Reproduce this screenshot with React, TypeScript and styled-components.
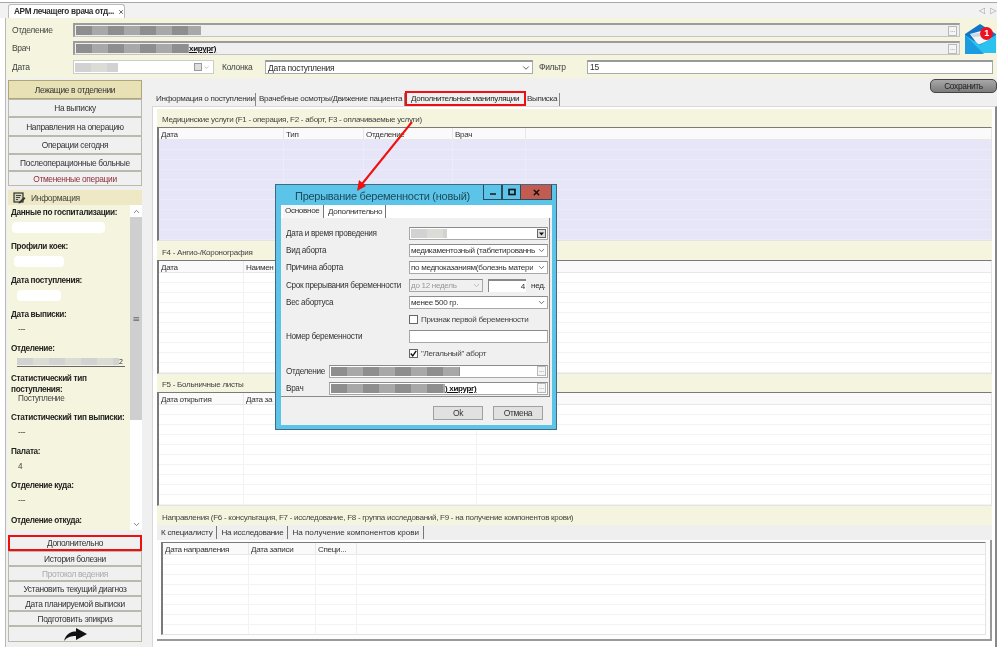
import React from "react";
import styled, { createGlobalStyle } from "styled-components";
import { ChevronDown, ChevronUp, X } from "lucide-react";

const GlobalStyle = createGlobalStyle`
  html, body {
    margin: 0;
    padding: 0;
    background: #fff;
  }
  body {
    font-family: "Liberation Sans", "Noto Sans", sans-serif;
    font-size: 8.5px;
    letter-spacing: -0.32px;
    color: #2e2e2e;
  }
  * {
    box-sizing: border-box;
  }
`;

const sideInfo = [
  { label: "Данные по госпитализации:", pill: 93, indent: 1, h: 34 },
  { label: "Профили коек:", pill: 50, indent: 3, h: 34 },
  { label: "Дата поступления:", pill: 44, indent: 6, h: 34 },
  { label: "Дата выписки:", value: "---", h: 34 },
  { label: "Отделение:", smudge: true, h: 30 },
  { label: "Статистический тип поступления:", value: "Поступление", tight: true, h: 39 },
  { label: "Статистический тип выписки:", value: "---", h: 34 },
  { label: "Палата:", value: "4", h: 34 },
  { label: "Отделение куда:", value: "---", h: 35 },
  { label: "Отделение откуда:", h: 12 },
];

const medCols = [
  { title: "Дата", w: 125 },
  { title: "Тип", w: 80 },
  { title: "Отделение", w: 89 },
  { title: "Врач", w: 73 },
];

// the dialog covers the rest of these two headers
const angioCols = [
  { title: "Дата", w: 85 },
  { title: "Наимен", w: 233 },
];

const sickCols = [
  { title: "Дата открытия", w: 85 },
  { title: "Дата за", w: 233 },
];

const referralCols = [
  { title: "Дата направления", w: 86 },
  { title: "Дата записи", w: 67 },
  { title: "Специ...", w: 41 },
];

type Col = { title: string; w: number };

function DataTable({ cols, height, lavender }: { cols: Col[]; height: number; lavender?: boolean }) {
  return (
    <TableBox $h={height}>
      <TableHead>
        {cols.map((c) => (
          <HeadCell key={c.title} $w={c.w}>
            {c.title}
          </HeadCell>
        ))}
        <HeadFill />
      </TableHead>
      <TableBody $lavender={lavender}>
        {cols.map((c) => (
          <BodyCol key={c.title} $w={c.w} $lavender={lavender} />
        ))}
      </TableBody>
    </TableBox>
  );
}

function Dots() {
  return <DotsButton>...</DotsButton>;
}

function MailIcon() {
  return (
    <MailWrap>
      <svg width="33" height="32" viewBox="0 0 33 32">
        <path d="M1 11 L16 1 L32 11 V30 H1 Z" fill="#1276c6" />
        <path d="M6 11 L24 6 L28 16 L14 22 Z" fill="#f4f4f4" />
        <path d="M6 11 L24 9 L20 13 L10 14 Z" fill="#c9d9e6" />
        <path d="M1 12 L16 22 L32 12 V30 H1 Z" fill="#2cc2f0" />
        <path d="M1 12 L20 31 H1 Z" fill="#1c9be0" />
      </svg>
      <MailBadge>1</MailBadge>
    </MailWrap>
  );
}

function NoteIcon() {
  return (
    <svg width="13" height="12" viewBox="0 0 13 12">
      <rect x="1" y="1" width="9" height="9" fill="#d8d4bc" stroke="#333" strokeWidth="1.2" />
      <path d="M3 3.5H8M3 5.5H7M3 7.5H5" stroke="#333" strokeWidth="0.9" />
      <path d="M6 10 L11 5 L12.5 6.5 L7.5 11 L5.5 11.5 Z" fill="#333" />
    </svg>
  );
}

function App() {
  return (
    <>
      <GlobalStyle />
      <Screen>
        <TabStrip>
          <DocTab>
            <DocTabTitle>АРМ лечащего врача отд...</DocTabTitle>
            <X size={8} strokeWidth={3} color="#333" />
          </DocTab>
          <StripArrows>◁ ▷</StripArrows>
        </TabStrip>

        <Filters>
          <FilterRow>
            <FilterLabel>Отделение</FilterLabel>
            <ReadField>
              <Smudge $w={125} />
              <Dots />
            </ReadField>
          </FilterRow>
          <FilterRow>
            <FilterLabel>Врач</FilterLabel>
            <ReadField>
              <Smudge $w={113} />
              <FieldText $bold>хирург)</FieldText>
              <Dots />
            </ReadField>
          </FilterRow>
          <DateRow>
            <FilterLabel>Дата</FilterLabel>
            <DateField>
              <Smudge $w={43} $light />
              <CalendarMark />
              <ChevronDown size={7} color="#999" />
            </DateField>
            <ColumnLabel>Колонка</ColumnLabel>
            <ColumnSelect>
              Дата поступления
              <ChevronDown size={10} color="#444" />
            </ColumnSelect>
            <FilterName>Фильтр</FilterName>
            <FilterInput>15</FilterInput>
          </DateRow>
          <MailIcon />
        </Filters>

        <Main>
          <Sidebar>
            <NavGroup>
              <NavButton $h={19} $active>Лежащие в отделении</NavButton>
              <NavButton $h={18}>На выписку</NavButton>
              <NavButton $h={19}>Направления на операцию</NavButton>
              <NavButton $h={18}>Операции сегодня</NavButton>
              <NavButton $h={17}>Послеоперационные больные</NavButton>
              <NavButton $h={15} $tone="#8d2f3a">Отмененные операции</NavButton>
            </NavGroup>

            <InfoHeader>
              <NoteIcon />
              <span>Информация</span>
            </InfoHeader>
            <InfoPanel>
              <InfoList>
                {sideInfo.map((item) => (
                  <InfoItem key={item.label} $h={item.h}>
                    <InfoLabel>{item.label}</InfoLabel>
                    {item.pill && <Pill $w={item.pill} $indent={item.indent} />}
                    {item.value && <InfoValue $tight={item.tight}>{item.value}</InfoValue>}
                    {item.smudge && (
                      <SmudgeLine>
                        <Smudge $w={102} $light $short />2
                      </SmudgeLine>
                    )}
                  </InfoItem>
                ))}
              </InfoList>
              <ScrollBar>
                <ScrollEnd>
                  <ChevronUp size={9} color="#555" />
                </ScrollEnd>
                <ScrollThumb>≡</ScrollThumb>
                <ScrollRest />
                <ScrollEnd>
                  <ChevronDown size={9} color="#555" />
                </ScrollEnd>
              </ScrollBar>
            </InfoPanel>

            <ActionGroup>
              <NavButton $h={16} $marked>Дополнительно</NavButton>
              <NavButton $h={15}>История болезни</NavButton>
              <NavButton $h={15} $tone="#aaa">Протокол ведения</NavButton>
              <NavButton $h={15}>Установить текущий диагноз</NavButton>
              <NavButton $h={15}>Дата планируемой выписки</NavButton>
              <NavButton $h={15}>Подготовить эпикриз</NavButton>
              <NavButton $h={16}>
                <svg width="23" height="13" viewBox="0 0 23 13">
                  <path d="M0 13 C2 6 6 3.5 12 3.5 V0 L23 6 L12 12 V8 C7 8 3 9 0 13 Z" fill="#111" />
                </svg>
              </NavButton>
            </ActionGroup>
          </Sidebar>

          <Content>
            <SaveRow>
              <SaveButton>Сохранить</SaveButton>
            </SaveRow>
            <TabRow>
              <PageTab $w={102} $pad={2}>Информация о поступлении</PageTab>
              <PageTab $w={149} $pad={3}>Врачебные осмотры/Движение пациента</PageTab>
              <MarkedTab>Дополнительные манипуляции</MarkedTab>
              <PageTab $w={34} $pad={1}>Выписка</PageTab>
            </TabRow>
            <Panel>
              <SectionHead $h={18}>Медицинские услуги (F1 - операция, F2 - аборт, F3 - оплачиваемые услуги)</SectionHead>
              <DataTable cols={medCols} height={114} lavender />
              <SectionHead $h={19}>F4 - Ангио-/Коронография</SectionHead>
              <DataTable cols={angioCols} height={114} />
              <SectionHead $h={18}>F5 - Больничные листы</SectionHead>
              <DataTable cols={sickCols} height={114} />
              <SectionHead $h={19}>
                Направления (F6 - консультация, F7 - исследование, F8 - группа исследований, F9 - на получение компонентов крови)
              </SectionHead>
              <SubTabs>
                <SubTab>К специалисту</SubTab>
                <SubTab>На исследование</SubTab>
                <SubTab $wide>На получение компонентов крови</SubTab>
              </SubTabs>
              <SubPanel>
                <DataTable cols={referralCols} height={93} />
              </SubPanel>
            </Panel>
          </Content>
        </Main>

        <Dialog>
          <TitleBar>
            <DialogTitle>Прерывание беременности (новый)</DialogTitle>
            <WinButton $w={19}>
              <svg width="8" height="8" viewBox="0 0 8 8">
                <path d="M1 6H7" stroke="#222" strokeWidth="1.6" />
              </svg>
            </WinButton>
            <WinButton $w={19}>
              <svg width="8" height="8" viewBox="0 0 8 8">
                <rect x="1" y="1.5" width="6" height="5" fill="none" stroke="#111" strokeWidth="1.6" />
              </svg>
            </WinButton>
            <WinButton $w={31} $close>
              <X size={9} strokeWidth={4} color="#111" />
            </WinButton>
          </TitleBar>
          <DialogBody>
            <DialogTabs>
              <DialogTab $w={41} $active>Основное</DialogTab>
              <DialogTab $w={62}>Дополнительно</DialogTab>
            </DialogTabs>
            <DialogPanel>
              <FormRow>
                <FormLabel>Дата и время проведения</FormLabel>
                <FormBox>
                  <Smudge $w={36} $light />
                  <DropMark>
                    <svg width="7" height="7" viewBox="0 0 7 7">
                      <path d="M1 2.5H6L3.5 5.5Z" fill="#111" />
                    </svg>
                  </DropMark>
                </FormBox>
              </FormRow>
              <FormRow>
                <FormLabel>Вид аборта</FormLabel>
                <FormBox>
                  <BoxText>медикаментозный (таблетированнь</BoxText>
                  <ChevronDown size={9} color="#444" />
                </FormBox>
              </FormRow>
              <FormRow>
                <FormLabel>Причина аборта</FormLabel>
                <FormBox>
                  <BoxText>по медпоказаниям(болезнь матери</BoxText>
                  <ChevronDown size={9} color="#444" />
                </FormBox>
              </FormRow>
              <FormRow>
                <FormLabel>Срок прерывания беременности</FormLabel>
                <TermCell>
                  <FormBox $w={74} $muted>
                    <BoxText>до 12 недель</BoxText>
                    <ChevronDown size={9} color="#aaa" />
                  </FormBox>
                  <WeekInput>4</WeekInput>
                  <span>нед.</span>
                </TermCell>
              </FormRow>
              <FormRow>
                <FormLabel>Вес абортуса</FormLabel>
                <FormBox>
                  <BoxText>менее 500 гр.</BoxText>
                  <ChevronDown size={9} color="#444" />
                </FormBox>
              </FormRow>
              <FormRow>
                <span />
                <CheckLine>
                  <CheckBox />
                  Признак первой беременности
                </CheckLine>
              </FormRow>
              <FormRow>
                <FormLabel>Номер беременности</FormLabel>
                <FormBox />
              </FormRow>
              <FormRow>
                <span />
                <CheckLine>
                  <CheckBox>
                    <svg width="9" height="9" viewBox="0 0 9 9">
                      <path d="M1 4.5 L3.5 7.5 L8 1" fill="none" stroke="#111" strokeWidth="1.8" />
                    </svg>
                  </CheckBox>
                  "Легальный" аборт
                </CheckLine>
              </FormRow>
              <FormRow $short>
                <FormLabel>Отделение</FormLabel>
                <FormBox>
                  <Smudge $w={129} />
                  <Dots />
                </FormBox>
              </FormRow>
              <FormRow $short>
                <FormLabel>Врач</FormLabel>
                <FormBox>
                  <Smudge $w={114} />
                  <FieldText $bold>) хирург)</FieldText>
                  <Dots />
                </FormBox>
              </FormRow>
            </DialogPanel>
            <DialogFooter>
              <DialogButton>Ok</DialogButton>
              <DialogButton>Отмена</DialogButton>
            </DialogFooter>
          </DialogBody>
        </Dialog>

        <ArrowLayer width="999" height="647" viewBox="0 0 999 647">
          <path d="M412 122 L362 184" stroke="#f01010" strokeWidth="2" fill="none" />
          <path d="M357 191 L359 180 L366 186 Z" fill="#f01010" />
        </ArrowLayer>
      </Screen>
    </>
  );
}

export default App;

const Screen = styled.div`
  position: relative;
  width: 999px;
  height: 647px;
  overflow: hidden;
  padding: 2px 2px 0 5px;
  background: #fff;
  filter: blur(0.3px);
`;

const TabStrip = styled.div`
  display: flex;
  justify-content: space-between;
  align-items: flex-end;
  height: 16px;
  margin-left: -5px;
  padding-left: 8px;
  border-top: 1px solid #a8a8a8;
  background: #f2f2f2;
`;

const DocTab = styled.div`
  display: flex;
  align-items: center;
  gap: 4px;
  width: 117px;
  height: 14px;
  padding-left: 5px;
  background: #fff;
  border: 1px solid #bbb;
  border-bottom: 0;
  border-radius: 3px 3px 0 0;
`;

const DocTabTitle = styled.span`
  font-weight: 700;
  font-size: 8.2px;
  white-space: nowrap;
`;

const StripArrows = styled.span`
  font-family: "DejaVu Sans", sans-serif;
  font-size: 8px;
  word-spacing: 3px;
  color: #999;
  padding: 0 1px 3px 0;
`;

const Filters = styled.div`
  position: relative;
  height: 60px;
  padding: 5px 0 0 6px;
  background: #f5f4de;
  border-left: 1px solid #b8b8b8;
  display: flex;
  flex-direction: column;
  gap: 4px;
`;

const FilterRow = styled.div`
  display: flex;
  align-items: center;
  height: 14px;
`;

const DateRow = styled(FilterRow)`
  margin-top: 1px;
`;

const FilterLabel = styled.span`
  width: 61px;
  font-size: 8.5px;
  color: #444;
`;

const ReadField = styled.div`
  display: flex;
  align-items: center;
  width: 887px;
  height: 14px;
  padding: 0 2px 0 1px;
  background: #efefef;
  border: 1px solid #c4c4c4;
  border-top: 2px solid #9c9c9c;
  border-left: 2px solid #9c9c9c;
`;

const DotsButton = styled.span`
  margin-left: auto;
  flex: none;
  width: 9px;
  height: 10px;
  line-height: 6px;
  text-align: center;
  font-size: 7px;
  color: #888;
  background: #f4f4f4;
  border: 1px solid #b9b9b9;
`;

const Smudge = styled.span<{ $w: number; $light?: boolean; $short?: boolean }>`
  display: inline-block;
  flex: none;
  width: ${({ $w }) => $w}px;
  height: ${({ $short }) => ($short ? 7 : 9)}px;
  background: repeating-linear-gradient(
    90deg,
    ${({ $light }) => ($light ? "#d2d2d2" : "#8e8e8e")} 0 16px,
    ${({ $light }) => ($light ? "#dcdcd6" : "#a8a8a8")} 16px 32px
  );
`;

const FieldText = styled.span<{ $bold?: boolean }>`
  font-weight: ${({ $bold }) => ($bold ? 700 : 400)};
  color: #111;
  font-size: 8px;
  text-decoration: underline;
  white-space: nowrap;
`;

const DateField = styled.div`
  display: flex;
  align-items: center;
  width: 141px;
  height: 14px;
  padding: 0 3px 0 1px;
  background: #fff;
  border: 1px solid #ccc;
`;

const CalendarMark = styled.span`
  margin-left: auto;
  width: 8px;
  height: 8px;
  margin-right: 1px;
  background: #ddd;
  border: 1px solid #999;
`;

const ColumnLabel = styled.span`
  width: 43px;
  margin-left: 8px;
  color: #444;
`;

const ColumnSelect = styled.div`
  display: flex;
  align-items: center;
  justify-content: space-between;
  width: 268px;
  height: 14px;
  padding: 0 1px 0 2px;
  background: #fff;
  border: 1px solid #aaa;
  border-top: 2px solid #999;
`;

const FilterName = styled.span`
  width: 48px;
  margin-left: 6px;
  color: #444;
`;

const FilterInput = styled.div`
  width: 406px;
  height: 14px;
  padding-left: 2px;
  line-height: 11px;
  background: #fff;
  border: 1px solid #aaa;
  border-top: 2px solid #999;
`;

const MailWrap = styled.div`
  position: absolute;
  top: 5px;
  right: 0;
  width: 33px;
  height: 32px;
`;

const MailBadge = styled.span`
  position: absolute;
  top: 4px;
  left: 16px;
  width: 13px;
  height: 13px;
  line-height: 13px;
  text-align: center;
  border-radius: 50%;
  background: #ee1122;
  color: #fff;
  font-size: 9px;
  font-weight: 700;
`;

const Main = styled.div`
  display: flex;
  height: 569px;
  background: #f0f0f0;
  border-left: 1px solid #b8b8b8;
`;

const Sidebar = styled.aside`
  display: flex;
  flex-direction: column;
  width: 134px;
  margin: 2px 0 0 2px;
  flex: none;
`;

const NavGroup = styled.div`
  display: flex;
  flex-direction: column;
`;

const ActionGroup = styled(NavGroup)`
  margin-top: 5px;
`;

const NavButton = styled.div<{ $h: number; $active?: boolean; $marked?: boolean; $tone?: string }>`
  display: flex;
  align-items: center;
  justify-content: center;
  height: ${({ $h }) => $h}px;
  font-size: 8.4px;
  white-space: nowrap;
  color: ${({ $tone }) => $tone ?? "#333"};
  background: ${({ $active }) => ($active ? "#e9e1b6" : "#f0f0f0")};
  border: ${({ $active, $marked }) =>
    $marked ? "2px solid #ee1010" : $active ? "1px solid #b0a574" : "1px solid #b9b9ad"};
`;

const InfoHeader = styled.div`
  display: flex;
  align-items: center;
  gap: 5px;
  height: 15px;
  margin-top: 4px;
  padding-left: 5px;
  background: #eee8c4;
  color: #444;
  font-size: 8.5px;
`;

const InfoPanel = styled.div`
  display: flex;
  height: 325px;
  background: #f5f4de;
`;

const InfoList = styled.div`
  flex: 1;
  min-width: 0;
  padding: 1.5px 0 0 3px;
  overflow: hidden;
`;

const InfoItem = styled.div<{ $h: number }>`
  height: ${({ $h }) => $h}px;
`;

const InfoLabel = styled.div`
  width: 118px;
  line-height: 11px;
  font-size: 8.2px;
  font-weight: 700;
  color: #222;
`;

const InfoValue = styled.div<{ $tight?: boolean }>`
  margin: ${({ $tight }) => ($tight ? "-1px" : "5px")} 0 0 7px;
  line-height: 10px;
  font-size: 8.2px;
  color: #444;
`;

const Pill = styled.div<{ $w: number; $indent?: number }>`
  width: ${({ $w }) => $w}px;
  height: 11px;
  margin: 4px 0 0 ${({ $indent }) => $indent ?? 0}px;
  background: #fff;
  border-radius: 4px;
`;

const SmudgeLine = styled.div`
  display: flex;
  align-items: center;
  width: 108px;
  margin: 4px 0 0 6px;
  font-size: 7px;
  line-height: 8px;
  border-bottom: 1px solid #666;
`;

const ScrollBar = styled.div`
  display: flex;
  flex-direction: column;
  width: 12px;
  flex: none;
  background: #fff;
`;

const ScrollEnd = styled.div`
  display: flex;
  align-items: center;
  justify-content: center;
  height: 12px;
  background: #fff;
`;

const ScrollThumb = styled.div`
  display: flex;
  align-items: center;
  justify-content: center;
  height: 203px;
  background: #cfcfcf;
  color: #666;
  font-family: "DejaVu Sans", sans-serif;
  font-size: 9px;
`;

const ScrollRest = styled.div`
  flex: 1;
`;

const Content = styled.main`
  display: flex;
  flex-direction: column;
  width: 845px;
  margin-left: 10px;
`;

const SaveRow = styled.div`
  display: flex;
  justify-content: flex-end;
  height: 17px;
  padding-top: 1px;
`;

const SaveButton = styled.div`
  width: 67px;
  height: 14px;
  line-height: 12px;
  text-align: center;
  font-size: 8.4px;
  color: #222;
  border: 1px solid #444;
  border-radius: 5px;
  background: linear-gradient(#a8a8a8, #7c7c7c);
`;

const TabRow = styled.div`
  display: flex;
  align-items: flex-end;
  height: 13px;
  padding-left: 2px;
`;

const PageTab = styled.div<{ $w: number; $pad: number }>`
  width: ${({ $w }) => $w}px;
  height: 13px;
  padding-left: ${({ $pad }) => $pad}px;
  line-height: 12px;
  white-space: nowrap;
  font-size: 8.1px;
  color: #333;
  border-right: 1px solid #888;
`;

const MarkedTab = styled.div`
  position: relative;
  z-index: 1;
  width: 121px;
  height: 15px;
  line-height: 11px;
  padding-left: 4px;
  white-space: nowrap;
  font-size: 8.1px;
  color: #222;
  background: #f0f0f0;
  border: 2px solid #ee1010;
`;

const Panel = styled.div`
  flex: 1;
  padding: 2px 3px 6px 4px;
  background: #fff;
  border: 1px solid #d8d8d8;
  border-right: 2px solid #888;
  border-bottom: 2px solid #888;
`;

const SectionHead = styled.div<{ $h: number }>`
  display: flex;
  align-items: center;
  height: ${({ $h }) => $h}px;
  padding: 3px 0 0 5px;
  background: #f5f4de;
  font-size: 8px;
  letter-spacing: -0.27px;
  color: #444;
  white-space: nowrap;
`;

const TableBox = styled.div<{ $h: number }>`
  display: flex;
  flex-direction: column;
  height: ${({ $h }) => $h}px;
  background: #fff;
  border-top: 1px solid #7a7a7a;
  border-left: 2px solid #7a7a7a;
  border-right: 1px solid #e4e4e4;
  border-bottom: 1px solid #e4e4e4;
`;

const TableHead = styled.div`
  display: flex;
  height: 12px;
  flex: none;
  background: #fafafa;
  border-bottom: 1px solid #e8e8e8;
`;

const HeadCell = styled.div<{ $w: number }>`
  width: ${({ $w }) => $w}px;
  flex: none;
  padding: 1px 0 0 2px;
  line-height: 11px;
  font-size: 8.1px;
  color: #333;
  overflow: hidden;
  white-space: nowrap;
  border-right: 1px solid #e8e8e8;
`;

const HeadFill = styled.div`
  flex: 1;
`;

const TableBody = styled.div<{ $lavender?: boolean }>`
  flex: 1;
  display: flex;
  background: ${({ $lavender }) =>
    $lavender
      ? "repeating-linear-gradient(#e6e6f8 0 9px, #ecebf8 9px 10px)"
      : "repeating-linear-gradient(#fff 0 9px, #f3f3f3 9px 10px)"};
`;

const BodyCol = styled.div<{ $w: number; $lavender?: boolean }>`
  width: ${({ $w }) => $w}px;
  flex: none;
  border-right: 1px solid ${({ $lavender }) => ($lavender ? "#ecebf8" : "#f3f3f3")};
`;

const SubTabs = styled.div`
  display: flex;
  align-items: center;
  gap: 4px;
  height: 15px;
  padding-left: 4px;
  background: #efefef;
`;

const SubTab = styled.div<{ $wide?: boolean }>`
  height: 13px;
  padding-right: 4px;
  line-height: 13px;
  font-size: 8.1px;
  letter-spacing: ${({ $wide }) => ($wide ? "0" : "-0.25px")};
  color: #333;
  border-right: 1px solid #777;
`;

const SubPanel = styled.div`
  padding: 2px 4px 4px 4px;
  background: #fdfdfd;
  border-right: 2px solid #999;
  border-bottom: 2px solid #999;
`;

const Dialog = styled.section`
  position: absolute;
  top: 184px;
  left: 275px;
  width: 282px;
  height: 246px;
  display: flex;
  flex-direction: column;
  padding: 0 4px 4px 5px;
  background: #5cc4e8;
  border: 1px solid #3f6a80;
`;

const TitleBar = styled.div`
  display: flex;
  align-items: flex-start;
  height: 20px;
  flex: none;
`;

const DialogTitle = styled.h2`
  flex: 1;
  margin: 0;
  padding: 4px 0 0 14px;
  font-family: "Liberation Sans", "Noto Sans", sans-serif;
  font-size: 11px;
  line-height: 14px;
  font-weight: 400;
  letter-spacing: -0.26px;
  color: #1e4a5c;
  white-space: nowrap;
`;

const WinButton = styled.div<{ $w: number; $close?: boolean }>`
  display: flex;
  align-items: center;
  justify-content: center;
  width: ${({ $w }) => $w}px;
  height: 15px;
  background: ${({ $close }) => ($close ? "#c25c50" : "#5cc4e8")};
  border: 1px solid #2c4a58;
  border-top: 0;
  border-left-width: ${({ $close }) => ($close ? 0 : 1)}px;
`;

const DialogBody = styled.div`
  flex: 1;
  display: flex;
  flex-direction: column;
  background: #f0f0f0;
`;

const DialogTabs = styled.div`
  display: flex;
  height: 13px;
  flex: none;
  padding-left: 2px;
  background: #fff;
`;

const DialogTab = styled.div<{ $w: number; $active?: boolean }>`
  width: ${({ $w }) => $w}px;
  height: 13px;
  padding-left: ${({ $active }) => ($active ? 2 : 4)}px;
  line-height: ${({ $active }) => ($active ? 11 : 13)}px;
  font-size: 8.1px;
  white-space: nowrap;
  color: #333;
  background: ${({ $active }) => ($active ? "#f6f6f6" : "#fff")};
  border-right: 1px solid #777;
`;

const DialogPanel = styled.div`
  flex: 1;
  display: flex;
  flex-direction: column;
  gap: 4.2px;
  padding: 9px 1px 0 5px;
  margin-right: 2px;
  overflow: hidden;
  background: #f0f0f0;
  border-bottom: 1px solid #8a8a8a;
  border-right: 1px solid #8a8a8a;
`;

const FormRow = styled.div<{ $short?: boolean }>`
  display: grid;
  grid-template-columns: ${({ $short }) => ($short ? "43px" : "123px")} 1fr;
  align-items: center;
  height: 13px;
  flex: none;
`;

const FormLabel = styled.span`
  font-size: 8.2px;
  color: #333;
  white-space: nowrap;
`;

const FormBox = styled.div<{ $w?: number; $muted?: boolean }>`
  display: flex;
  align-items: center;
  justify-content: space-between;
  width: ${({ $w }) => ($w ? `${$w}px` : "100%")};
  height: 13px;
  padding: 0 1px;
  background: ${({ $muted }) => ($muted ? "#f0f0f0" : "#fff")};
  color: ${({ $muted }) => ($muted ? "#999" : "#333")};
  border: 1px solid #a8a8a8;
  border-top-color: #8c8c8c;
`;

const BoxText = styled.span`
  font-size: 8.1px;
  white-space: nowrap;
  overflow: hidden;
`;

const DropMark = styled.span`
  display: flex;
  align-items: center;
  justify-content: center;
  width: 9px;
  height: 9px;
  background: #ddd;
  border: 1px solid #666;
`;

const TermCell = styled.div`
  display: flex;
  align-items: center;
  font-size: 8.1px;
`;

const WeekInput = styled.div`
  width: 38px;
  height: 13px;
  margin: 0 5px;
  padding-right: 1px;
  line-height: 11px;
  text-align: right;
  background: #fff;
  border-top: 2px solid #888;
  border-left: 1px solid #888;
`;

const CheckLine = styled.div`
  display: flex;
  align-items: center;
  gap: 3px;
  font-size: 8.1px;
  color: #444;
`;

const CheckBox = styled.span`
  display: flex;
  align-items: center;
  justify-content: center;
  width: 9px;
  height: 9px;
  background: #fff;
  border: 1px solid #666;
`;

const DialogFooter = styled.div`
  display: flex;
  justify-content: flex-end;
  gap: 10px;
  height: 28px;
  flex: none;
  padding: 9px 9px 0 0;
`;

const DialogButton = styled.div`
  width: 50px;
  height: 14px;
  line-height: 12px;
  text-align: center;
  font-size: 8.5px;
  color: #333;
  background: #e1e1e1;
  border: 1px solid #a0a0a0;
`;

const ArrowLayer = styled.svg`
  position: absolute;
  top: 0;
  left: 0;
  pointer-events: none;
`;
